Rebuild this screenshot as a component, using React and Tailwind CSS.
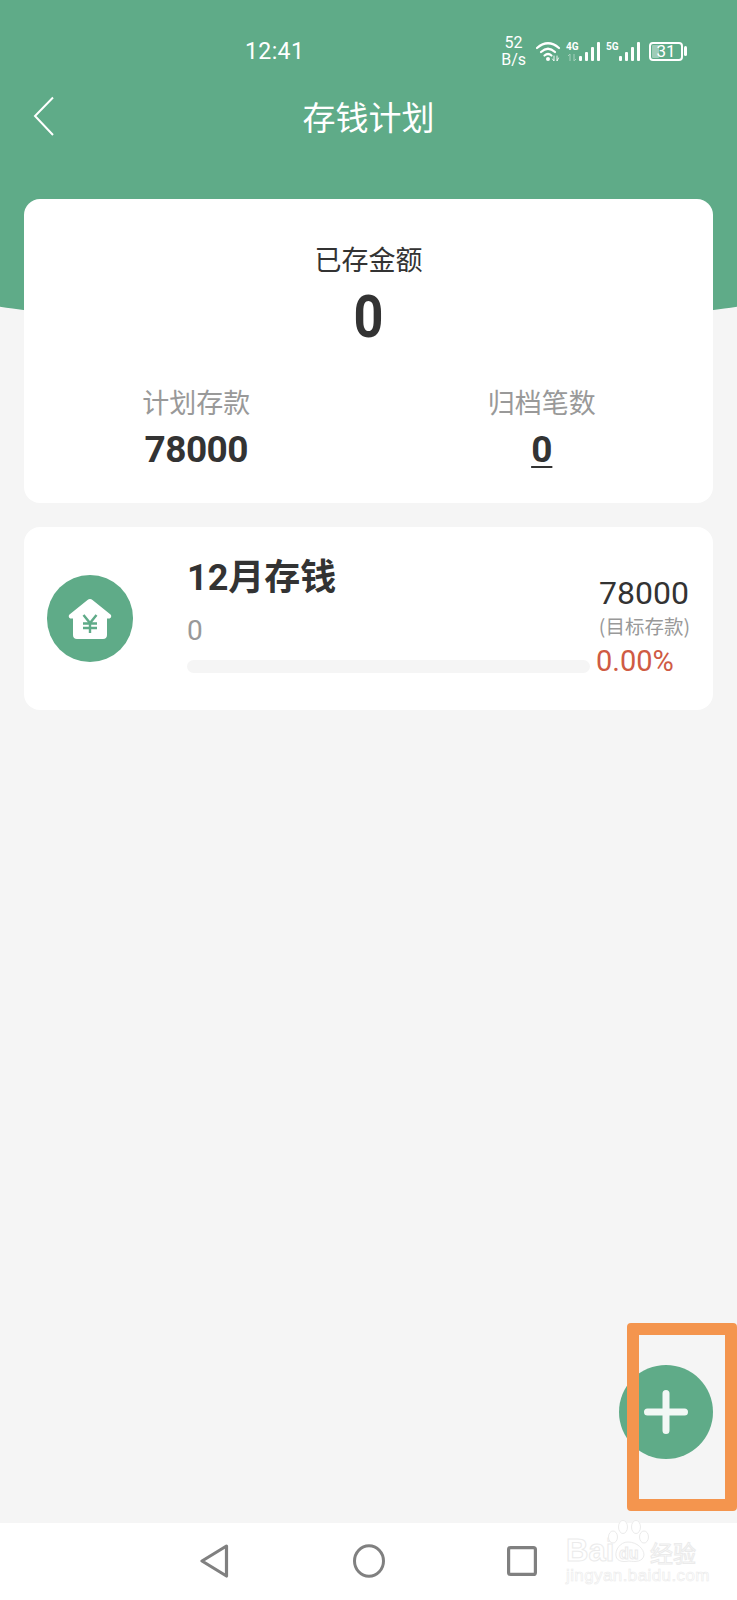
const sans = "font-['Noto_Sans_CJK_SC','Noto_Sans',sans-serif]";
const digits = "font-['Roboto','Noto_Sans_CJK_SC',sans-serif]";

function SignalBars() {
  return (
    <svg width="21" height="19" viewBox="0 0 21 19" fill="white" className="ml-[13px]">
      <rect x="0" y="14" width="3" height="5" rx="1" />
      <rect x="6" y="10" width="3" height="9" rx="1" />
      <rect x="12" y="5" width="3" height="14" rx="1" />
      <rect x="18" y="0" width="3" height="19" rx="1" />
    </svg>
  );
}

function StatusBar() {
  return (
    <div className={`flex h-[50px] items-center pt-[26px] box-content text-white ${digits}`}>
      <span className="ml-[245px] text-[23px] leading-none tracking-[0.4px]">12:41</span>
      <div className="ml-auto mr-[50px] flex items-center">
        <div className="flex flex-col items-center text-[16px] leading-[17px]">
          <span>52</span>
          <span>B/s</span>
        </div>
        <svg width="26" height="20" viewBox="0 0 26 20" fill="none" stroke="white" strokeWidth="2.2" strokeLinecap="round" className="ml-[10px]">
          <path d="M1 7Q12 -2.5 23 7" />
          <path d="M5 11Q12 4.5 19 11" />
          <path d="M8.5 14.5Q12 11.5 15.5 14.5" />
          <circle cx="12" cy="18" r="2" fill="white" stroke="none" />
          <path d="M18 15V20L16.5 18M21 15V20L22.5 17" strokeWidth="1" opacity="0.9" />
        </svg>
        <div className="relative ml-[4px] flex items-end">
          <span className="absolute left-0 top-0 text-[10px] font-bold leading-none">4G</span>
          <svg width="10" height="7" viewBox="0 0 10 7" stroke="white" strokeWidth="1" fill="none" opacity="0.45" className="absolute bottom-0 left-[1px]">
            <path d="M3 7V0L1 2M7 0V7L9 5" />
          </svg>
          <SignalBars />
        </div>
        <div className="relative ml-[6px] flex items-end">
          <span className="absolute left-0 top-0 text-[10px] font-bold leading-none">5G</span>
          <SignalBars />
        </div>
        <div className="ml-[9px] flex items-center gap-[1px]">
          <div className="relative flex h-[19px] w-[34px] items-center justify-center rounded-[4px] border-2 border-white text-[17px] leading-none">
            <div className="absolute bottom-[1px] left-[1px] top-[1px] w-[7px] rounded-[1px] bg-white/40" />
            <span className="relative">31</span>
          </div>
          <div className="h-[10px] w-[3px] rounded-full bg-white" />
        </div>
      </div>
    </div>
  );
}

function SummaryCard() {
  return (
    <div className="relative mx-[24px] -mt-[135px] h-[304px] rounded-[16px] bg-white pt-[40px]">
      <div className={`text-center text-[27px] leading-[40px] text-[#333] ${sans}`}>已存金额</div>
      <div className={`mt-[10px] scale-x-[0.87] text-center text-[60px] font-bold leading-[56px] text-[#333] ${digits}`}>0</div>
      <div className="mt-[38px] grid grid-cols-2">
        <div className="flex flex-col items-center">
          <span className={`text-[27px] leading-[38px] text-[#999] ${sans}`}>计划存款</span>
          <span className={`mt-[7px] text-[37px] font-bold leading-[44px] tracking-[-0.5px] text-[#333] ${digits}`}>78000</span>
        </div>
        <div className="flex flex-col items-center pl-[2px]">
          <span className={`text-[27px] leading-[38px] text-[#999] ${sans}`}>归档笔数</span>
          <span className={`mt-[7px] text-[37px] font-bold leading-[44px] text-[#333] underline decoration-2 underline-offset-[4px] ${digits}`}>0</span>
        </div>
      </div>
    </div>
  );
}

function HouseIcon() {
  return (
    <div className="flex h-[87px] w-[86px] shrink-0 items-center justify-center rounded-full bg-[#5fab88]">
      <svg width="44" height="42" viewBox="0 0 44 42">
        <path
          d="M19.5 2L1.5 16.5C0 18 1 20.5 3 20.5L5 20.5L5 37C5 39.5 6.5 41 9 41L35 41C37.5 41 39 39.5 39 37L39 20.5L41 20.5C43 20.5 44 18 42.5 16.5L24.5 2C23 0.8 21 0.8 19.5 2Z"
          fill="white"
        />
        <path d="M15.5 17L22 25L28.5 17M22 25V35M15 25.5H29M15 30H29" fill="none" stroke="#5fab88" strokeWidth="2.4" />
      </svg>
    </div>
  );
}

function PlanCard() {
  return (
    <div className="mx-[24px] mt-[24px] flex h-[183px] items-start rounded-[16px] bg-white">
      <div className="ml-[23px] mt-[48px]">
        <HouseIcon />
      </div>
      <div className="ml-[54px] w-[403px] shrink-0">
        <div className={`mt-[27px] text-[36px] font-bold leading-[48px] text-[#333] ${digits}`}>12月存钱</div>
        <div className={`mt-[13px] text-[28px] leading-[32px] text-[#999] ${digits}`}>0</div>
        <div className="mt-[13px] h-[13px] rounded-full bg-[#f5f5f5]" />
      </div>
      <div className="mt-[46px] flex flex-1 flex-col pl-[6px]">
        <span className={`pr-[24px] text-right text-[32px] leading-[40px] text-[#333] ${digits}`}>78000</span>
        <span className={`whitespace-nowrap pr-[23px] text-right text-[19.5px] leading-[26px] text-[#999] ${sans}`}>(目标存款)</span>
        <span className={`mt-[3px] text-[29px] leading-[38px] text-[#cf5b44] ${digits}`}>0.00%</span>
      </div>
    </div>
  );
}

function BottomNav() {
  return (
    <div className="flex h-[77px] shrink-0 items-start bg-white pt-[21px]">
      <svg width="29" height="34" viewBox="0 0 29 34" fill="none" stroke="#808080" strokeWidth="3.2" strokeLinejoin="round" className="ml-[200px]">
        <path d="M26.5 2L2 17L26.5 32Z" />
      </svg>
      <svg width="32" height="34" viewBox="0 0 32 34" fill="none" stroke="#808080" strokeWidth="3" className="ml-[124px]">
        <ellipse cx="16" cy="17" rx="14.5" ry="15.3" />
      </svg>
      <svg width="30" height="30" viewBox="0 0 30 30" fill="none" stroke="#808080" strokeWidth="3.2" className="ml-[122px] mt-[2px]">
        <rect x="1.6" y="1.6" width="26.8" height="26.8" rx="2" />
      </svg>
    </div>
  );
}

function Watermark() {
  return (
    <div className="absolute left-[566px] top-[1520px] h-[66px] w-[132px] text-white [-webkit-text-stroke:1px_#ebebeb]">
      <span className="absolute left-0 top-[14px] font-['Liberation_Sans',sans-serif] text-[31px] font-bold leading-[34px]">Bai</span>
      <svg width="44" height="44" viewBox="0 0 44 44" fill="white" stroke="#ebebeb" strokeWidth="1" className="absolute left-[42px] top-0">
        <ellipse cx="5" cy="17" rx="4.5" ry="6" />
        <ellipse cx="15" cy="7" rx="4.5" ry="6.5" />
        <ellipse cx="28" cy="7" rx="4.5" ry="6.5" />
        <ellipse cx="36" cy="17" rx="4.5" ry="6" />
        <path d="M20 22C12 22 7 30 8 36C9 42 16 42 21 41C27 42 35 42 36 35C36 29 29 22 20 22Z" />
      </svg>
      <span className="absolute left-[53px] top-[26px] font-['Liberation_Sans',sans-serif] text-[16px] font-bold leading-[16px]">du</span>
      <span className={`absolute left-[84px] top-[19px] text-[23px] leading-[26px] ${sans}`}>经验</span>
      <span className="absolute left-0 top-[46px] whitespace-nowrap font-['Liberation_Sans',sans-serif] text-[17px] leading-[20px] tracking-[0.4px] [-webkit-text-stroke:0.6px_#ebebeb]">jingyan.baidu.com</span>
    </div>
  );
}

export default function App() {
  return (
    <div className="relative flex h-[1600px] w-[737px] flex-col overflow-hidden bg-[#f5f5f5]">
      <div className="h-[334px] shrink-0 bg-[#5fab88] [clip-path:ellipse(930px_334px_at_50%_0)]">
        <StatusBar />
        <div className="mt-[15px] grid h-[50px] grid-cols-[1fr_auto_1fr] items-center">
          <svg width="22" height="40" viewBox="0 0 22 40" fill="none" stroke="white" strokeWidth="2" className="ml-[33px]">
            <path d="M20 1.5L2 20L20 39" />
          </svg>
          <span className={`text-[33px] leading-none text-white ${sans}`}>存钱计划</span>
        </div>
      </div>
      <SummaryCard />
      <PlanCard />
      <div className="flex-1" />
      <BottomNav />
      <Watermark />

      <div className="absolute left-[619px] top-[1365px] flex h-[94px] w-[94px] items-center justify-center rounded-full bg-[#5fab88]">
        <svg width="46" height="46" viewBox="0 0 46 46" stroke="#f2f8f5" strokeWidth="7" strokeLinecap="round">
          <path d="M23 4.5V41.5M4.5 23H41.5" />
        </svg>
      </div>
      <div className="absolute left-[627px] top-[1323px] h-[188px] w-[110px] rounded-[4px] border-[12px] border-[#f4954e]" />
    </div>
  );
}
